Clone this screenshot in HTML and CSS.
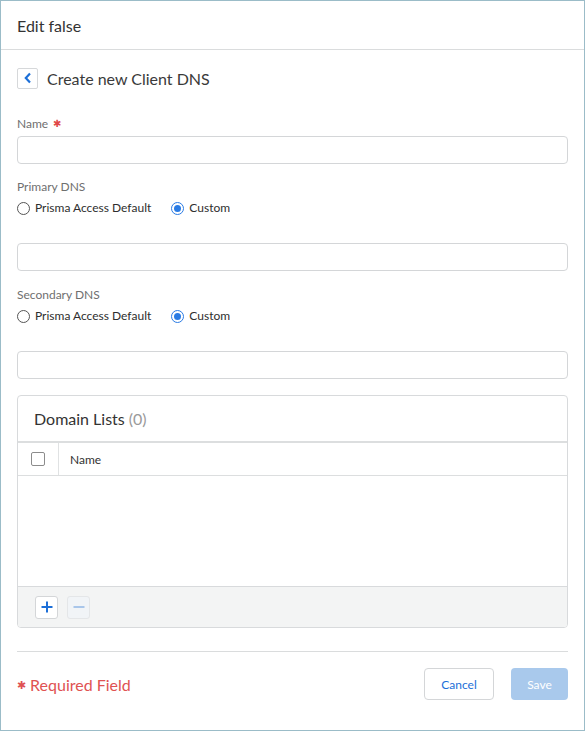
FILE: index.html
```html
<!DOCTYPE html>
<html lang="en">
<head>
<meta charset="utf-8">
<title>Edit false</title>
<link rel="stylesheet" href="styles.css">
</head>
<body>
<div class="frame">
  <div class="header">Edit false</div>
  <div class="content">
    <div class="title-row">
      <button class="back-btn" type="button" aria-label="Back">
        <svg width="10" height="12" viewBox="0 0 10 12"><path d="M7 1.5 L2.8 6 L7 10.5" fill="none" stroke="#1c6fd8" stroke-width="2.2" stroke-linejoin="miter"/></svg>
      </button>
      <span class="title">Create new Client DNS</span>
    </div>

    <div class="field-label first">Name <span class="req">&#x2731;</span></div>
    <div class="input"></div>

    <div class="field-label">Primary DNS</div>
    <div class="radio-row">
      <span class="radio"><span class="dot"></span>Prisma Access Default</span>
      <span class="radio checked"><span class="dot"></span>Custom</span>
    </div>
    <div class="input spaced"></div>

    <div class="field-label second">Secondary DNS</div>
    <div class="radio-row">
      <span class="radio"><span class="dot"></span>Prisma Access Default</span>
      <span class="radio checked"><span class="dot"></span>Custom</span>
    </div>
    <div class="input spaced"></div>

    <div class="panel">
      <div class="panel-head">Domain Lists <span class="count">(0)</span></div>
      <div class="table-head">
        <div class="cell-check"><span class="checkbox"></span></div>
        <div class="cell-name">Name</div>
      </div>
      <div class="table-body"></div>
      <div class="panel-foot">
        <button class="icon-btn" type="button" aria-label="Add">
          <svg width="12" height="12" viewBox="0 0 12 12"><path d="M6 0.5V11.5M0.5 6H11.5" stroke="#1c6fd8" stroke-width="2"/></svg>
        </button>
        <button class="icon-btn disabled" type="button" aria-label="Remove">
          <svg width="12" height="12" viewBox="0 0 12 12"><path d="M0.5 6H11.5" stroke="#a9c6ea" stroke-width="2"/></svg>
        </button>
      </div>
    </div>

    <div class="divider"></div>

    <div class="actions">
      <span class="required"><span class="req-star">&#x2731;</span> Required Field</span>
      <div class="buttons">
        <button class="btn cancel" type="button">Cancel</button>
        <button class="btn save" type="button">Save</button>
      </div>
    </div>
  </div>
</div>
</body>
</html>
```
FILE: styles.css
```css
* { box-sizing: border-box; }

html, body {
  margin: 0;
  padding: 0;
  background: #ffffff;
}

body {
  font-family: Lato, "Open Sans", Arial, sans-serif;
  color: #333333;
}

.frame {
  width: 585px;
  height: 731px;
  border: 1px solid #9bbcc8;
  background: #ffffff;
}

.header {
  height: 49px;
  padding: 0 16px;
  display: flex;
  align-items: center;
  font-size: 16px;
  color: #333333;
  border-bottom: 1px solid #dadcdd;
}

.content {
  padding: 18px 16px 0;
}

.title-row {
  display: flex;
  align-items: center;
  gap: 9px;
  height: 20px;
}

.back-btn {
  width: 21px;
  height: 21px;
  padding: 0;
  border: 1px solid #d6d8da;
  border-radius: 2px;
  background: #ffffff;
  display: flex;
  align-items: center;
  justify-content: center;
}

.title {
  font-size: 16px;
  color: #3a3a3a;
}

.field-label {
  font-size: 12px;
  line-height: 16px;
  color: #6f6f6f;
  margin-top: 15px;
}

.field-label.first {
  margin-top: 27px;
}

.field-label.second {
  margin-top: 16px;
}

.req {
  color: #e04848;
  font-size: 10px;
  margin-left: 2px;
  vertical-align: 1px;
}

.input {
  margin-top: 4px;
  height: 28px;
  border: 1px solid #d4d6d8;
  border-radius: 4px;
  background: #ffffff;
}

.input.spaced {
  margin-top: 27px;
}

.radio-row {
  margin-top: 5px;
  display: flex;
  gap: 20px;
  font-size: 12px;
  line-height: 16px;
  color: #2e2e2e;
}

.radio {
  display: flex;
  align-items: center;
  gap: 5px;
}

.radio .dot {
  width: 13px;
  height: 13px;
  border-radius: 50%;
  border: 1px solid #555555;
  background: #ffffff;
  position: relative;
}

.radio.checked .dot {
  border-color: #2a7be4;
}

.radio.checked .dot::after {
  content: "";
  position: absolute;
  left: 2px;
  top: 2px;
  width: 7px;
  height: 7px;
  border-radius: 50%;
  background: #2a7be4;
}

.panel {
  margin-top: 16px;
  border: 1px solid #d8dadc;
  border-radius: 4px;
  overflow: hidden;
}

.panel-head {
  height: 47px;
  padding: 0 16px;
  display: flex;
  align-items: center;
  gap: 4px;
  font-size: 16px;
  color: #333333;
  border-bottom: 2px solid #dcdedf;
}

.count {
  color: #9a9a9a;
}

.table-head {
  display: flex;
  height: 33px;
  border-bottom: 1px solid #dcdedf;
}

.cell-check {
  width: 41px;
  display: flex;
  align-items: center;
  padding-left: 13px;
  border-right: 1px solid #e0e2e3;
}

.checkbox {
  width: 14px;
  height: 14px;
  border: 1px solid #8c8c8c;
  border-radius: 2px;
  background: #ffffff;
}

.cell-name {
  display: flex;
  align-items: center;
  padding-left: 11px;
  font-size: 12px;
  color: #333333;
}

.table-body {
  height: 110px;
  background: #ffffff;
}

.panel-foot {
  height: 41px;
  background: #f3f4f4;
  border-top: 1px solid #d8dadc;
  display: flex;
  align-items: center;
  gap: 9px;
  padding-left: 17px;
}

.icon-btn {
  width: 23px;
  height: 23px;
  padding: 0;
  border: 1px solid #d4d6d8;
  border-radius: 3px;
  background: #ffffff;
  display: flex;
  align-items: center;
  justify-content: center;
}

.icon-btn.disabled {
  background: #f1f4f7;
  border-color: #e4e6e8;
}

.divider {
  margin-top: 23px;
  height: 1px;
  background: #dadcdd;
}

.actions {
  margin-top: 16px;
  display: flex;
  align-items: center;
  justify-content: space-between;
}

.required {
  font-size: 16px;
  color: #e05252;
}

.req-star {
  font-size: 11px;
  vertical-align: 2px;
}

.buttons {
  display: flex;
  gap: 17px;
}

.btn {
  height: 32px;
  border-radius: 4px;
  font-family: inherit;
  font-size: 12px;
  padding: 0;
}

.btn.cancel {
  width: 70px;
  border: 1px solid #d4d6d8;
  background: #ffffff;
  color: #1c6fd8;
}

.btn.save {
  width: 57px;
  border: none;
  background: #a9c9ec;
  color: #ffffff;
}
```
